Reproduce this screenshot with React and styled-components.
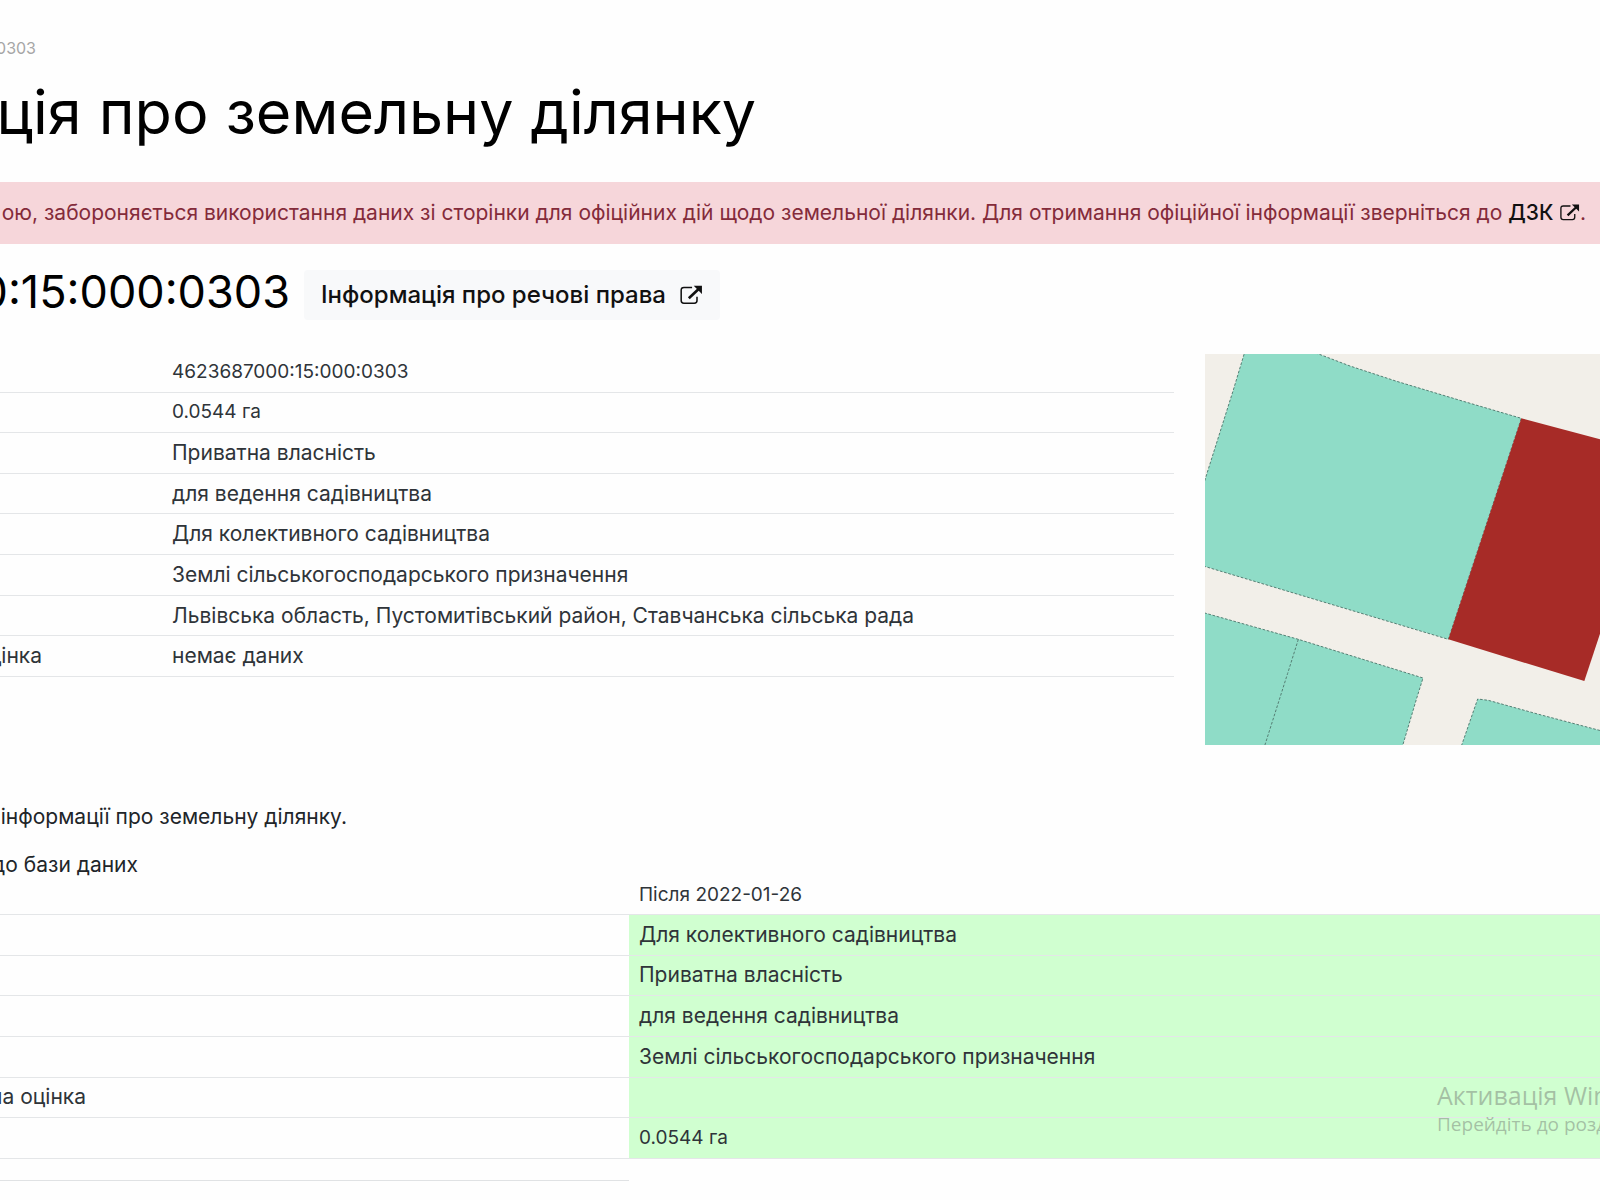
import React from "react";
import styled, { createGlobalStyle } from "styled-components";

const GlobalStyle = createGlobalStyle`
  body {
    margin: 0;
    background-color: #fefefe;
    color: #2f3439;
    font-family: Inter, "Noto Sans", sans-serif;
    font-size: 21px;
    line-height: 24px;
  }
`;

const Page = styled.main`
  position: relative;
  min-height: 100vh;
  overflow: hidden;
`;

const Breadcrumb = styled.nav`
  display: flex;
  justify-content: flex-end;
  width: 36px;
  padding-top: 36px;
  color: #a6a6a6;
  font-size: 16px;
`;

const Title = styled.h1`
  display: flex;
  justify-content: flex-end;
  width: 756px;
  margin: 16px 0 34px;
  color: #000;
  font-size: 61px;
  font-weight: 400;
  line-height: 72px;
  white-space: nowrap;
`;

const Alert = styled.div`
  display: flex;
  justify-content: flex-end;
  padding: 19px 14px;
  background-color: #f6d6da;
  color: #842b3a;
  white-space: pre;
`;

const AlertLink = styled.a`
  color: #111;
  font-weight: 500;
  text-decoration: none;
`;

const NumberRow = styled.div`
  display: flex;
  align-items: flex-start;
  gap: 14px;
  margin: 26px 0 32px;
`;

const CadastralNumber = styled.h2`
  display: flex;
  justify-content: flex-end;
  width: 290px;
  margin: 0;
  color: #000;
  font-size: 45px;
  font-weight: 400;
  line-height: 44px;
`;

const RightsLink = styled.a`
  display: flex;
  align-items: center;
  gap: 13px;
  padding: 13px 17px;
  border-radius: 4px;
  background-color: #f8f9fa;
  color: #111;
  font-size: 24px;
  font-weight: 500;
  text-decoration: none;
`;

const LinkIcon = styled.svg`
  width: 1em;
  height: 1em;
  vertical-align: -3px;
`;

const Details = styled.section`
  display: grid;
  grid-template-columns: 1174px 1fr;
  gap: 31px;
  align-items: start;
`;

const Table = styled.table`
  width: 100%;
  height: ${(props) => props.$height};
  border-collapse: collapse;
  table-layout: fixed;
`;

const Cell = styled.td`
  width: ${(props) => props.$width || "auto"};
  height: 39px;
  padding: 0 10px;
  border-bottom: 1px solid #e4e6e8;
  background-color: ${(props) => (props.$added ? "#d0ffd0" : "transparent")};
  font-size: ${(props) => (props.$numeric ? "19px" : "21px")};
  font-weight: 400;
  text-align: left;
`;

const CutLabel = styled.span`
  display: flex;
  justify-content: flex-end;
  width: ${(props) => props.$width};
  margin-left: -10px;
  white-space: nowrap;
`;

const MapView = styled.svg`
  display: block;
  width: 100%;
  height: 391px;
  margin-top: 2px;
  background-color: #f2efe9;
`;

const Note = styled.p`
  display: flex;
  justify-content: flex-end;
  width: ${(props) => props.$width};
  margin: 0;
  color: #212529;
  line-height: 20px;
  white-space: nowrap;

  & + & {
    margin-top: 28px;
  }
`;

const History = styled.section`
  padding-top: 62px;
`;

const Divider = styled.hr`
  width: 629px;
  margin: 21px 0 0;
  border: 0;
  border-top: 1px solid #e0e2e4;
`;

const Watermark = styled.aside`
  position: absolute;
  top: 1079px;
  left: 1437px;
  color: rgba(120, 130, 120, 0.5);
  font-family: "Open Sans", sans-serif;
  font-size: 19px;
  line-height: 26px;
  white-space: nowrap;
`;

const WatermarkTitle = styled.div`
  font-size: 25px;
  line-height: 32px;
`;

const details = [
  { value: "4623687000:15:000:0303", numeric: true },
  { value: "0.0544 га", numeric: true },
  { value: "Приватна власність" },
  { value: "для ведення садівництва" },
  { value: "Для колективного садівництва" },
  { value: "Землі сільськогосподарського призначення" },
  { value: "Львівська область, Пустомитівський район, Ставчанська сільська рада" },
  { label: "цінка", value: "немає даних" },
];

const changes = [
  { value: "Для колективного садівництва" },
  { value: "Приватна власність" },
  { value: "для ведення садівництва" },
  { value: "Землі сільськогосподарського призначення" },
  { label: "на оцінка", value: "" },
  { value: "0.0544 га", numeric: true },
];

const ExternalLink = () => (
  <LinkIcon viewBox="0 -2 22 22" aria-hidden="true">
    <path
      d="M12 2.2H4.5Q2 2.2 2 4.7V14Q2 16.5 4.5 16.5H14Q16.5 16.5 16.5 14V10.5"
      fill="none"
      stroke="currentColor"
      strokeWidth="1.4"
    />
    <path d="M9 12L18 3.5" stroke="currentColor" strokeWidth="2.4" />
    <path d="M13.5 0.5H21V8Z" fill="currentColor" />
  </LinkIcon>
);

const ParcelMap = () => (
  <MapView viewBox="75 42 1185 1174" preserveAspectRatio="xMinYMin slice" role="img">
    <g fill="#8fdcc7" stroke="#557f74" strokeWidth="3" strokeDasharray="8 5">
      <path d="M196 30L160 150L81 400L60 470V675L805 898L1024 235L850 184L650 124L510 78L400 36Z" />
      <path d="M60 815L355 898L729 1014L710 1075L664 1230H60Z" />
      <path d="M355 898L323 1000L250 1230" fill="none" />
      <path d="M840 1230L893 1077L925 1081L1080 1124L1300 1182V1230Z" />
    </g>
    <path d="M1024 235L1300 308V760L1213 1023L805 898Z" fill="#a72b27" />
  </MapView>
);

const App = () => {
  return (
    <Page>
      <GlobalStyle />
      <Breadcrumb>0303</Breadcrumb>
      <Title>ція про земельну ділянку</Title>

      <Alert>
        ою, забороняється використання даних зі сторінки для офіційних дій щодо земельної ділянки. Для отримання офіційної інформації зверніться до{" "}
        <AlertLink href="#dzk">
          ДЗК <ExternalLink />
        </AlertLink>
        .
      </Alert>

      <NumberRow>
        <CadastralNumber>0:15:000:0303</CadastralNumber>
        <RightsLink href="#rights">
          Інформація про речові права <ExternalLink />
        </RightsLink>
      </NumberRow>

      <Details>
        <Table $height="325px">
          <tbody>
            {details.map(({ label, value, numeric }) => (
              <tr key={value}>
                <Cell as="th" $width="142px">
                  {label && <CutLabel $width="42px">{label}</CutLabel>}
                </Cell>
                <Cell $numeric={numeric}>{value}</Cell>
              </tr>
            ))}
          </tbody>
        </Table>
        <ParcelMap />
      </Details>

      <History>
        <Note $width="347px">інформації про земельну ділянку.</Note>
        <Note $width="138px">до бази даних</Note>
        <Table $height="284px">
          <thead>
            <tr>
              <Cell as="th" $width="609px" />
              <Cell as="th" $numeric>Після 2022-01-26</Cell>
            </tr>
          </thead>
          <tbody>
            {changes.map(({ label, value, numeric }) => (
              <tr key={label || value}>
                <Cell as="th">
                  {label && <CutLabel $width="86px">{label}</CutLabel>}
                </Cell>
                <Cell $added $numeric={numeric}>{value}</Cell>
              </tr>
            ))}
          </tbody>
        </Table>
        <Divider />
      </History>

      <Watermark>
        <WatermarkTitle>Активація Win</WatermarkTitle>
        Перейдіть до розд
      </Watermark>
    </Page>
  );
};

export default App;
